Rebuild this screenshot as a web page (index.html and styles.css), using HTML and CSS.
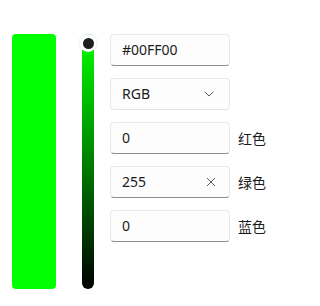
FILE: index.html
```html
<!DOCTYPE html>
<html>
<head>
<meta charset="utf-8">
<link rel="stylesheet" href="styles.css">
</head>
<body>
<div class="picker">
  <div class="preview"></div>
  <div class="slider">
    <div class="track"></div>
    <div class="thumb"><div class="dot"></div></div>
  </div>
  <div class="fields">
    <div class="row"><div class="box"><span class="val">#00FF00</span></div></div>
    <div class="row"><div class="box select"><span class="val">RGB</span>
      <svg class="chev" width="10" height="6" viewBox="0 0 10 6"><path d="M1 1 L5 5 L9 1" fill="none" stroke="#5c5c5c" stroke-width="1" stroke-linecap="round" stroke-linejoin="round"/></svg>
    </div></div>
    <div class="row"><div class="box"><span class="val">0</span></div><span class="label">红色</span></div>
    <div class="row"><div class="box"><span class="val">255</span>
      <svg class="x" width="10" height="10" viewBox="0 0 10 10"><path d="M1 1 L9 9 M9 1 L1 9" fill="none" stroke="#5c5c5c" stroke-width="1"/></svg>
    </div><span class="label">绿色</span></div>
    <div class="row"><div class="box"><span class="val">0</span></div><span class="label">蓝色</span></div>
  </div>
</div>
</body>
</html>
```
FILE: styles.css
```css
html, body { margin: 0; padding: 0; background: #ffffff; }
body { font-family: "Noto Sans", "Noto Sans CJK SC", sans-serif; color: #1b1b1b; }
.picker { display: flex; align-items: flex-start; padding: 34px 0 0 12px; }
.preview { width: 44px; height: 255px; background: #00ff00; border-radius: 4px; }
.slider { position: relative; width: 12px; height: 255px; margin-left: 26px; }
.track { width: 12px; height: 255px; border-radius: 6px; background: linear-gradient(to bottom, #00ff00, #000000); }
.thumb { position: absolute; left: -3px; top: 0; width: 18px; height: 18px; border-radius: 50%; background: #ffffff; box-shadow: 0 0 1px rgba(0,0,0,0.25); display: flex; align-items: center; justify-content: center; }
.dot { width: 11px; height: 11px; border-radius: 50%; background: #1e1e1e; }
.fields { display: flex; flex-direction: column; gap: 12px; margin-left: 16px; }
.row { display: flex; align-items: center; }
.box { box-sizing: border-box; width: 120px; height: 32px; border: 1px solid #e8e8e8; border-bottom-color: #8d8d8d; border-radius: 4px; background: #fdfdfd; display: flex; align-items: center; padding: 0 10px 0 11px; font-size: 14px; }
.box.select { border-bottom-color: #e5e5e5; }
.val { flex: 1; line-height: 20px; }
.chev { margin-right: 5px; }
.x { margin-right: 3px; }
.label { margin-left: 8px; font-size: 14px; }
```
